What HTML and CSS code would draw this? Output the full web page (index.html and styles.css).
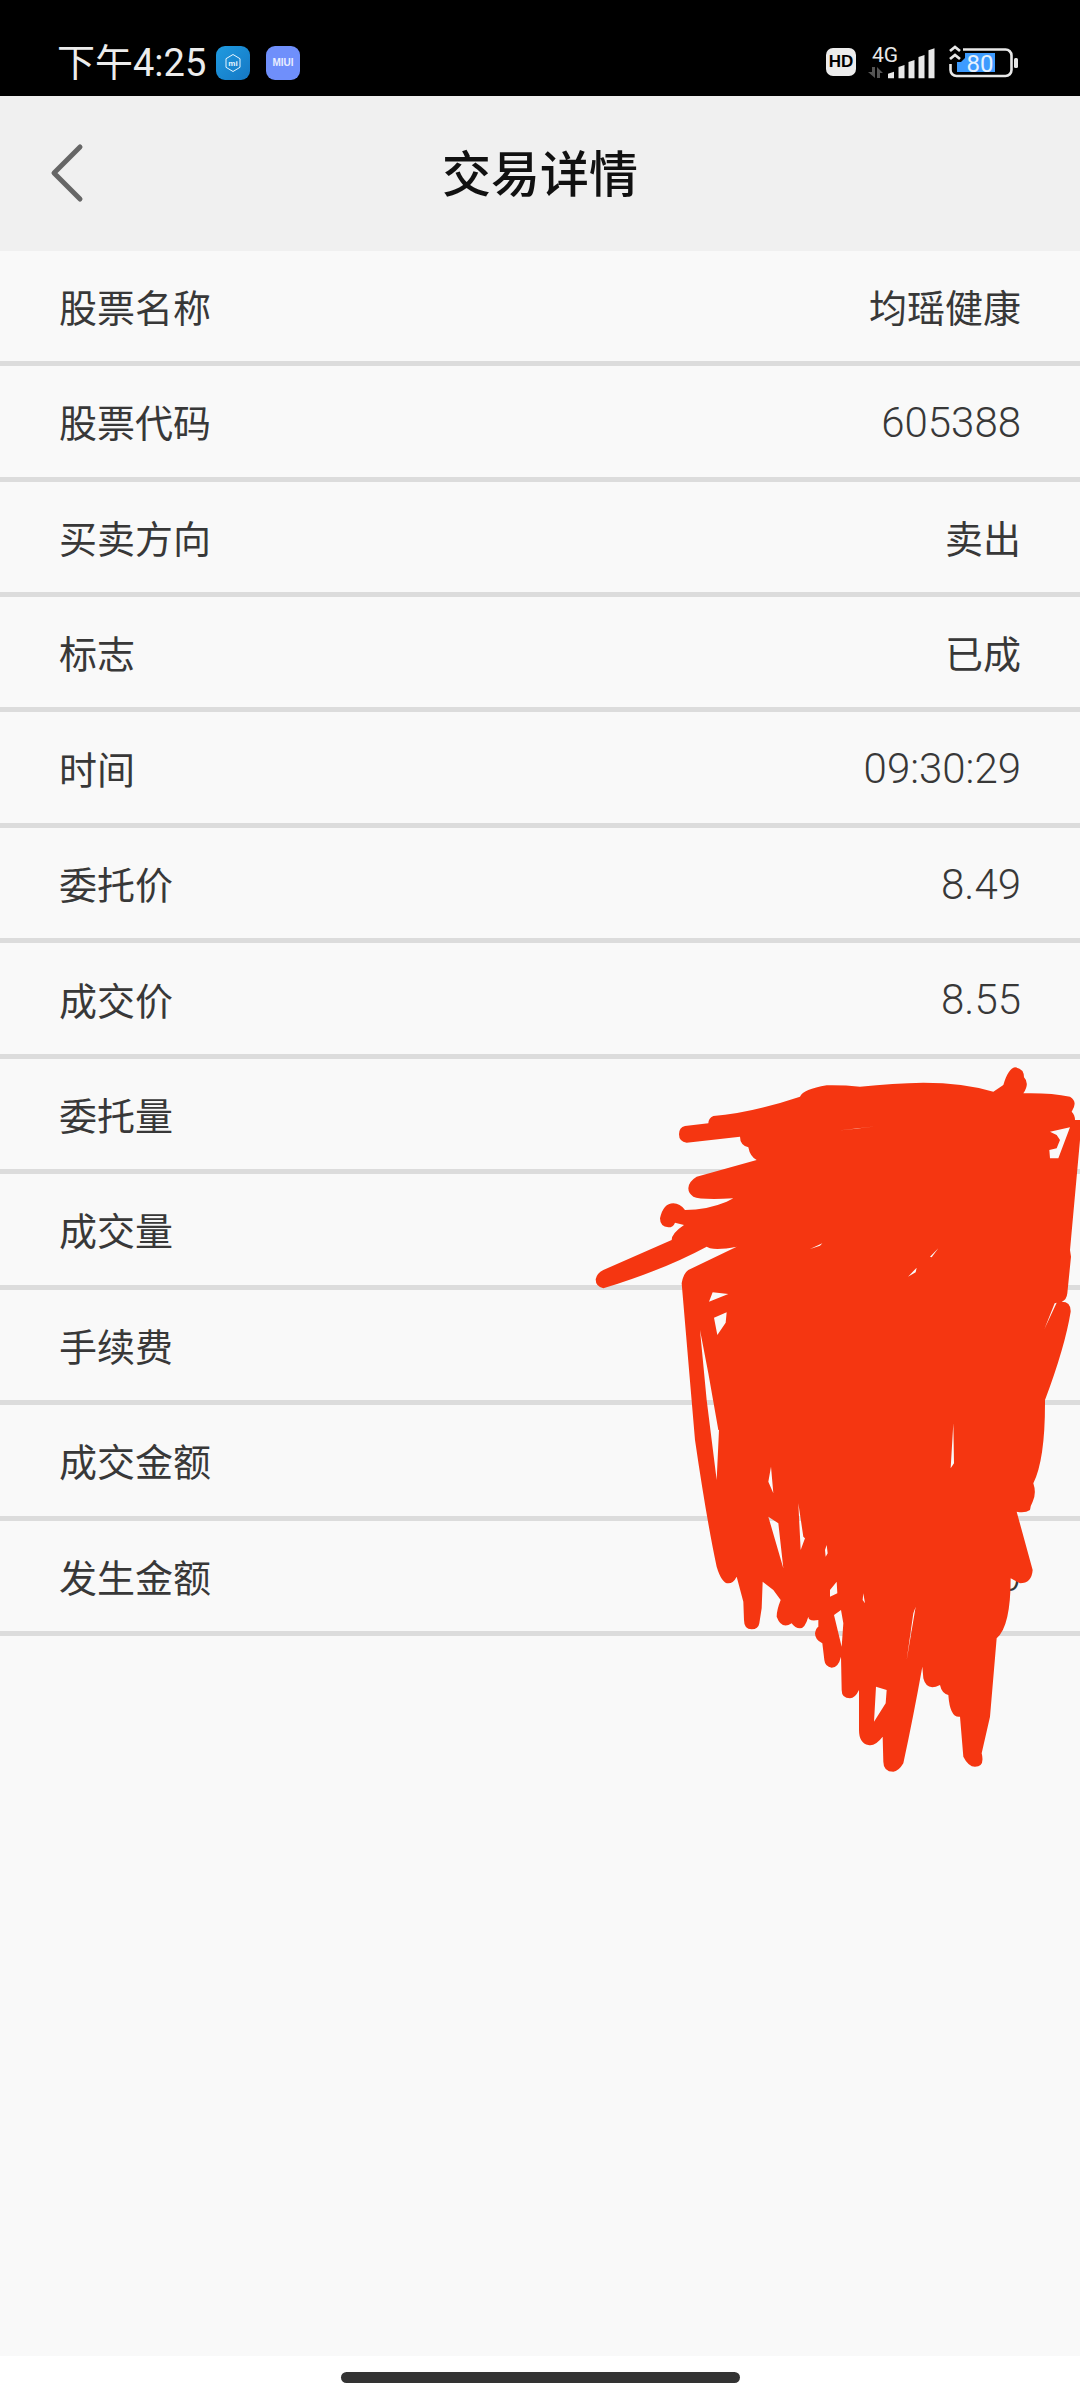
FILE: index.html
```html
<!DOCTYPE html>
<html lang="zh-CN">
<head>
<meta charset="utf-8">
<title>交易详情</title>
<link rel="stylesheet" href="styles.css">
</head>
<body>
<div class="page">
  <div class="status">
    <div class="status-left">
      <span class="clock">下午4:25</span>
      <span class="app app-mi">
        <svg viewBox="0 0 34 34" class="app-svg"><path d="M17 8.500l7 4.200v8.600l-7 4.200-7-4.200v-8.600z" fill="none" stroke="#e8f6ff" stroke-width="1"/><text x="17" y="20" text-anchor="middle" class="mi-text">mi</text></svg>
      </span>
      <span class="app app-miui">MIUI</span>
    </div>
    <div class="status-right">
      <span class="hd">HD</span>
      <svg class="signal" viewBox="0 0 72 34" width="72" height="34">
        <text x="6" y="15.700" class="net">4G</text>
        <path d="M9 21v11l-7-6h4v-5zM11 32V21l6 6h-3v5z" fill="#555"/>
        <path d="M22 27.700l6-2v6.600h-6zM32.500 21l6-2v13.300h-6zM42.500 16l6-2v18.300h-6zM52.500 11l6-2v23.300h-6zM62.500 4.300l6-2v30h-6z" fill="#e8e8e8"/>
      </svg>
      <svg class="battery" viewBox="0 0 72 38" width="72" height="38">
        <path d="M4.500 22v6a6 6 0 0 0 6 6h49a6 6 0 0 0 6-6V13.500a6 6 0 0 0-6-6H17" fill="none" stroke="#e8e8e8" stroke-width="2.600"/>
        <path d="M19 11h30v19H11V20h4l4-4z" fill="#3d9bff"/>
        <path d="M4 9l5-4 5 4M4 17l5-4 5 4" fill="none" stroke="#e8e8e8" stroke-width="2.800"/>
        <rect x="68" y="16" width="4" height="10" rx="1.500" fill="#e8e8e8"/>
        <text x="34" y="30" text-anchor="middle" class="batt-num">80</text>
      </svg>
    </div>
  </div>
  <header class="bar">
    <svg class="back" viewBox="0 0 40 68" width="40" height="68"><path d="M32 8L6 34l26 26" fill="none" stroke="#666" stroke-width="5" stroke-linecap="round" stroke-linejoin="round"/></svg>
    <h1 class="title">交易详情</h1>
  </header>
  <main class="list">
    <div class="row"><span>股票名称</span><span class="val">均瑶健康</span></div>
    <div class="row"><span>股票代码</span><span class="num">605388</span></div>
    <div class="row"><span>买卖方向</span><span class="val">卖出</span></div>
    <div class="row"><span>标志</span><span class="val">已成</span></div>
    <div class="row"><span>时间</span><span class="num">09:30:29</span></div>
    <div class="row"><span>委托价</span><span class="num">8.49</span></div>
    <div class="row"><span>成交价</span><span class="num">8.55</span></div>
    <div class="row"><span>委托量</span></div>
    <div class="row"><span>成交量</span></div>
    <div class="row"><span>手续费</span></div>
    <div class="row"><span>成交金额</span></div>
    <div class="row"><span>发生金额</span><span class="num">0</span></div>
  </main>
  <footer class="nav"><span class="home"></span></footer>
  <svg class="scribble" viewBox="0 0 1560 2400" width="520" height="800" aria-hidden="true">
    <path fill-rule="evenodd" d="M720 170Q730 148 800 136Q850 135 900 140Q1000 130 1090 128Q1210 128 1300 155L1330 135Q1345 85 1365 82Q1392 85 1392 112Q1410 130 1390 160Q1470 158 1530 170Q1555 185 1535 215Q1545 225 1545 240L1560 240L1560 300L1530 630L1533 650L1522 760Q1520 780 1505 785Q1533 785 1532 815Q1515 920 1455 1080L1455 1090Q1455 1260 1420 1330Q1430 1360 1418 1385Q1412 1395 1410 1410Q1395 1420 1370 1415L1418 1590Q1415 1630 1380 1630L1352 1615Q1352 1760 1310 1795L1290 2030L1265 2140Q1275 2180 1245 2180Q1225 2180 1210 2150L1200 2030Q1170 2035 1165 1965Q1145 1960 1140 1935Q1100 1955 1090 1915L1087 1880Q1060 2030 1030 2170Q1015 2195 1000 2195Q970 2195 970 2165L968 2090Q945 2120 925 2115Q897 2110 897 2070L897 1950Q885 1975 870 1975Q845 1975 845 1950L843 1850Q835 1883 815 1883Q795 1880 793 1860L787 1810Q765 1800 765 1780Q767 1765 775 1760L775 1740Q745 1745 745 1730Q735 1765 720 1765Q705 1765 695 1750Q665 1770 650 1730Q650 1710 662 1680L640 1650L608 1625L605 1705L598 1750Q595 1768 575 1768Q552 1768 552 1740L550 1685L530 1610Q520 1630 505 1630Q485 1630 470 1580Q440 1440 405 1200L365 730Q370 700 385 690L530 620Q480 630 450 625L440 620Q310 690 130 745Q107 740 107 718Q110 700 130 690L335 600Q335 580 372 555L345 548Q340 562 325 562Q300 560 300 535Q310 490 340 490Q360 490 375 510Q440 510 500 485L520 475Q420 480 400 470Q385 460 385 445Q385 425 410 410L590 360Q570 350 565 322Q540 315 540 290L380 308Q357 305 357 283Q357 262 375 258L445 250Q445 235 460 228Q570 220 720 170Z
    M830 272L955 258 880 267Z
    M1470 275L1530 262 1495 355 1470 355 1468 330 1490 325 1500 300 1490 285Z
    M447 785L458 757 505 762Z
    M462 833L500 817 497 848 472 885Z
    M420 870L445 1000 475 1170 477 1170 470 1320 440 1080Z
    M750 627L787 610 780 617Z
    M1110 650L1135 625 1115 652Z
    M1044 710L1070 683 1067 697Z
    M1453 868L1484 790 1490 788Z
    M1180 1150L1182 1270 1172 1285Z
    M633 1280L625 1325 640 1360Z
    M715 1390L730 1490 735 1495 722 1530Z
    M625 1430L655 1450 670 1585Z
    M795 1530L800 1515 803 1540 797 1550Z
    M948 1940L980 1950 977 1990 942 2045Z
    M810 1650L830 1625 832 1660 810 1670Z
    M1067 1700L1040 1860 1060 1720Z
    M822 1725L843 1710 850 1750 845 1820Z
    M910 1660L915 1690 908 1680Z" fill="#f53611"/>
  </svg>
</div>
</body>
</html>
```

FILE: styles.css
```css
* { box-sizing: border-box; }
html, body { margin: 0; padding: 0; }
body { font-family: "Noto Sans CJK SC", "Noto Sans", sans-serif; background: #fff; }
.page { position: relative; width: 1080px; height: 2400px; display: flex; flex-direction: column; overflow: hidden; background: #f9f9f9; }

.status { height: 96px; background: #000; display: flex; justify-content: space-between; align-items: flex-start; padding: 45px 0 0 57px; }
.status-left { display: flex; align-items: center; height: 36px; }
.clock { font-family: Roboto, "Noto Sans CJK SC", sans-serif; font-size: 38px; line-height: 36px; color: #ececec; width: 159px; white-space: nowrap; }
.app { width: 34px; height: 34px; border-radius: 9px; display: block; }
.app-mi { background: linear-gradient(135deg, #1f9be0, #1577c4); }
.app-svg { display: block; width: 34px; height: 34px; }
.mi-text { font-family: "Liberation Sans", sans-serif; font-size: 8px; font-weight: 700; fill: #e8f6ff; }
.app-miui { margin-left: 16px; background: #6f8ffb; color: #e9edff; font-family: "Liberation Sans", sans-serif; font-size: 10px; font-weight: 700; line-height: 34px; text-align: center; }
.status-right { display: flex; align-items: flex-start; padding-right: 62px; }
.hd { width: 30px; height: 28px; margin: 3px 10px 0 0; border-radius: 7px; background: #ececec; color: #000; font-family: "Liberation Sans", sans-serif; font-weight: 700; font-size: 17px; line-height: 28px; text-align: center; }
.signal { display: block; margin-top: 1px; }
.net { font-family: Roboto, sans-serif; font-size: 21px; fill: #e8e8e8; }
.battery { display: block; margin: -3px 0 0 8px; }
.batt-num { font-family: Roboto, sans-serif; font-size: 24px; fill: #e6f2ff; }

.bar { height: 154.6px; padding-bottom: 5px; background: #f0f0f0; display: flex; align-items: center; justify-content: center; position: relative; }
.back { position: absolute; left: 48px; top: 43px; }
.title { margin: 0; font-size: 49px; line-height: 60px; font-weight: 500; color: #111; }

.list { display: flex; flex-direction: column; }
.row { height: 115.46px; flex: none; display: flex; justify-content: space-between; align-items: center; padding: 0 59px; border-bottom: 5px solid #dcdcdc; font-size: 38px; line-height: 50px; color: #383838; }
.num { font-family: Roboto, sans-serif; font-size: 42px; font-weight: 300; padding-top: 3px; }

.nav { margin-top: auto; height: 44px; background: #fff; display: flex; justify-content: center; padding-top: 16px; }
.home { display: block; width: 399px; height: 11px; border-radius: 6px; background: #333; }

.scribble { position: absolute; left: 560px; top: 1040px; }
```
